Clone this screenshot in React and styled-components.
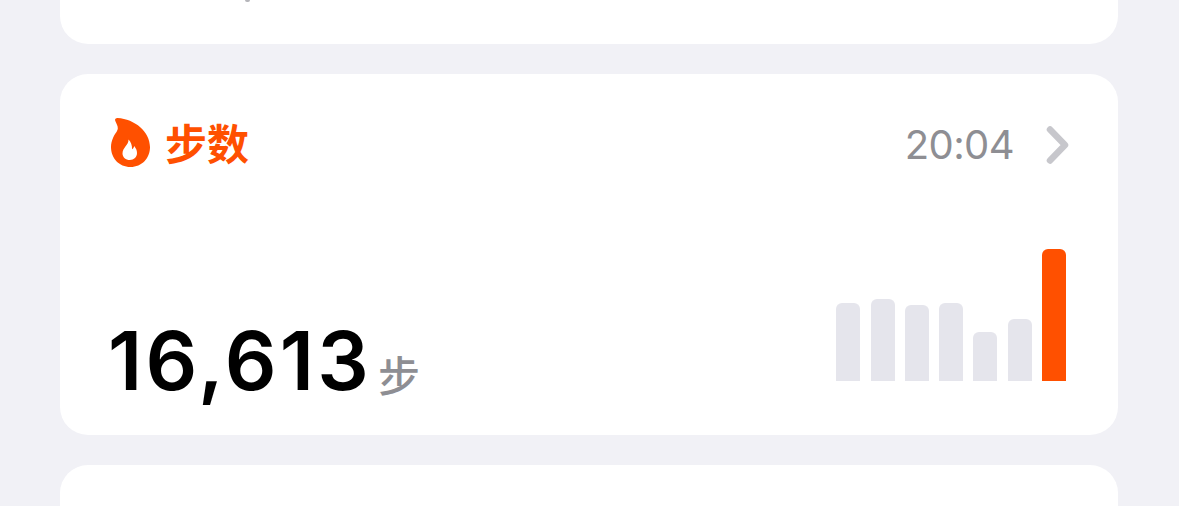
import React from "react";
import styled, { createGlobalStyle } from "styled-components";

const Global = createGlobalStyle`
  html, body { margin: 0; padding: 0; background: #f1f1f6; }
  body { font-family: Inter, "Noto Sans CJK SC", sans-serif; }
`;

const Screen = styled.main`
  height: 506px;
  overflow: hidden;
  box-sizing: border-box;
  padding: 0 61px 0 60px;
  display: flex;
  flex-direction: column;
  gap: 30px;
`;

const Card = styled.section`
  background: #fff;
  border-radius: 28px;
`;

const ClippedTop = styled(Card)`
  height: 44px;
  flex: none;
  border-radius: 0 0 28px 28px;
  position: relative;
`;

/* Tail of a descender from the row scrolled out above */
const Descender = styled.span`
  position: absolute;
  top: 0;
  left: 185px;
  width: 5px;
  height: 2px;
  border-radius: 0 0 3px 3px;
  background: #b5b5ba;
`;

const ClippedBottom = styled(Card)`
  flex: 1;
  border-radius: 28px 28px 0 0;
`;

const StepsCard = styled(Card)`
  height: 361px;
  flex: none;
  box-sizing: border-box;
  padding: 43px 48px 0 48px;
  display: flex;
  flex-direction: column;
`;

const Header = styled.header`
  display: flex;
  align-items: center;
  height: 56px;
`;

const FlameIcon = styled.svg`
  width: 39px;
  height: 49px;
  flex: none;
  margin: 0 0 5px 3px;
`;

const Title = styled.h2`
  margin: 0 0 6px 15px;
  font: 700 42px/1 "Noto Sans CJK SC", sans-serif;
  color: #ff5000;
`;

const Time = styled.span`
  margin-left: auto;
  font: 400 40px/1 Inter, sans-serif;
  color: #8e8e93;
  letter-spacing: -0.6px;
`;

const Chevron = styled.svg`
  width: 26px;
  height: 38px;
  margin-left: 30px;
  flex: none;
`;

const Body = styled.div`
  display: flex;
  justify-content: space-between;
  align-items: flex-end;
  margin-top: 76px;
  height: 132px;
`;

const Reading = styled.div`
  display: flex;
  align-items: flex-end;
  margin-bottom: -21px;
`;

const Value = styled.span`
  font: 600 81px/1 Inter, sans-serif;
  color: #000;
  letter-spacing: 3.2px;
`;

const Unit = styled.span`
  margin: 0 0 7px 6px;
  font: 500 42px/1 "Noto Sans CJK SC", sans-serif;
  color: #8e8e93;
`;

const Bars = styled.div`
  display: flex;
  align-items: flex-end;
  gap: 10.3px;
  margin-right: 4px;
  height: 132px;
`;

const Bar = styled.div`
  width: 24px;
  height: ${(p) => p.$h}px;
  border-radius: 6px 6px 0 0;
  background: ${(p) => (p.$active ? "#ff5000" : "#e5e5ec")};
`;

const Flame = () => (
  <FlameIcon viewBox="0 0 39 49" aria-hidden="true">
    <path
      fill="#ff5000"
      fillRule="evenodd"
      d="M6.500 0C4.800 0 3.600 1 4.200 2.800C5.300 5.500 7 8 6.800 10.500C6.600 13.500 3.800 15.500 2 20C0.700 23 0 26 0 29C0 40 8 49 19.500 49C31 49 39 40 39 29C39 14 24 1 6.500 0ZM17.500 21.500C17.800 27 11.500 29.500 11.500 35.500C11.500 39.300 14.800 42 18.800 42C23 42 26 39 26 35C26 32.300 24.900 30.200 23.200 28C22.700 29.800 22 30.800 21 31.300C21.300 27.500 20 24 17.500 21.500Z"
    />
  </FlameIcon>
);

const weekly = [78, 82, 76, 78, 49, 62, 132];

export default function App() {
  return (
    <>
      <Global />
      <Screen>
        <ClippedTop>
          <Descender />
        </ClippedTop>
        <StepsCard>
          <Header>
            <Flame />
            <Title>步数</Title>
            <Time>20:04</Time>
            <Chevron viewBox="0 0 26 38" aria-hidden="true">
              <path
                d="M6 3.500L21 19L6 34.500"
                fill="none"
                stroke="#c7c7cc"
                strokeWidth="6.5"
                strokeLinecap="round"
                strokeLinejoin="round"
              />
            </Chevron>
          </Header>
          <Body>
            <Reading>
              <Value>16,613</Value>
              <Unit>步</Unit>
            </Reading>
            <Bars>
              {weekly.map((h, i) => (
                <Bar key={i} $h={h} $active={i === weekly.length - 1} />
              ))}
            </Bars>
          </Body>
        </StepsCard>
        <ClippedBottom />
      </Screen>
    </>
  );
}
